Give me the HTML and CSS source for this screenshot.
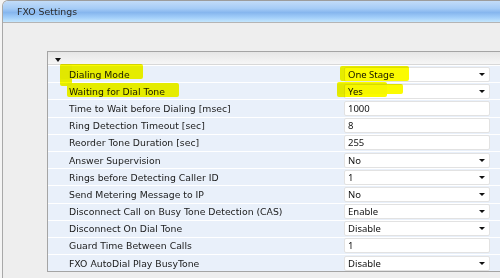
FILE: index.html
```html
<!DOCTYPE html>
<html>
<head>
<meta charset="UTF-8">
<title>FXO Settings</title>
<link rel="stylesheet" href="styles.css">
</head>
<body>
<div class="window">
  <div class="titlebar">FXO Settings</div>
  <div class="content">
    <div class="panel">
      <div class="panel-head"><span class="caret"></span></div>
      <div class="row"><span class="label">Dialing Mode</span><span class="field sel">One Stage<i class="arrow"></i></span></div>
      <div class="row"><span class="label">Waiting for Dial Tone</span><span class="field sel">Yes<i class="arrow"></i></span></div>
      <div class="row"><span class="label">Time to Wait before Dialing [msec]</span><span class="field">1000</span></div>
      <div class="row"><span class="label">Ring Detection Timeout [sec]</span><span class="field">8</span></div>
      <div class="row"><span class="label">Reorder Tone Duration [sec]</span><span class="field">255</span></div>
      <div class="row"><span class="label">Answer Supervision</span><span class="field sel">No<i class="arrow"></i></span></div>
      <div class="row"><span class="label">Rings before Detecting Caller ID</span><span class="field sel">1<i class="arrow"></i></span></div>
      <div class="row"><span class="label">Send Metering Message to IP</span><span class="field sel">No<i class="arrow"></i></span></div>
      <div class="row"><span class="label">Disconnect Call on Busy Tone Detection (CAS)</span><span class="field sel">Enable<i class="arrow"></i></span></div>
      <div class="row"><span class="label">Disconnect On Dial Tone</span><span class="field sel">Disable<i class="arrow"></i></span></div>
      <div class="row"><span class="label">Guard Time Between Calls</span><span class="field">1</span></div>
      <div class="row"><span class="label">FXO AutoDial Play BusyTone</span><span class="field sel">Disable<i class="arrow"></i></span></div>
    </div>
  </div>
</div>
<!-- highlighter marks drawn over the page -->
<div class="mark m1"></div>
<div class="mark m1b"></div>
<div class="mark m2"></div>
<div class="mark m3"></div>
<div class="mark m4"></div>
<div class="mark m4b"></div>
</body>
</html>
```
FILE: styles.css
```css
html, body {
margin: 0;
height: 278px;
overflow: hidden;
background: #f4f4f4;
}
body {
position: relative;
font-family: "DejaVu Sans", Verdana, sans-serif;
}
.window {
margin-left: 2px;
height: 278px;
border-left: 1px solid #a8a8a8;
border-top: 1px solid #9c9c9c;
border-top-left-radius: 6px;
background: #eeeeee;
}
.titlebar {
height: 21px;
line-height: 21px;
padding-left: 14px;
font-size: 9.4px;
color: #2b2b2b;
border-top-left-radius: 5px;
border-bottom: 1px solid #b4b4b4;
background: linear-gradient(#c2dcf8, #a6ccf6 35%, #86b6ee 55%, #a4d0fa 80%, #c4e6fd);
}
.content {
padding: 28px 0 0 44px;
}
.panel {
width: 470px;
border: 1px solid #a4a4a4;
border-right: none;
background: #e9f0fa;
}
.panel-head {
height: 12px;
border-bottom: 1px solid #d8d8d8;
background: linear-gradient(#e6e6e6, #f6f6f6);
padding-left: 7px;
}
.caret {
display: inline-block;
margin-top: 6px;
border-left: 3px solid transparent;
border-right: 3px solid transparent;
border-top: 4px solid #111;
vertical-align: top;
}
.row {
display: flex;
align-items: center;
height: 16.2px;
border-top: 1px solid #ffffff;
}
.label {
width: 275px;
padding-left: 21px;
font-size: 9.3px;
color: #1a1a1a;
white-space: nowrap;
}
.field {
position: relative;
box-sizing: border-box;
width: 146px;
height: 15px;
line-height: 13px;
padding-left: 3px;
background: #ffffff;
border: 1px solid #e2e2e2;
border-radius: 2px;
font-family: "Noto Sans", sans-serif;
font-size: 9.5px;
color: #111;
}
.arrow {
position: absolute;
right: 4px;
top: 5px;
border-left: 3px solid transparent;
border-right: 3px solid transparent;
border-top: 3px solid #111;
}
.mark {
position: absolute;
background: #fbfb00;
mix-blend-mode: multiply;
border-radius: 2px;
}
.m1 { left: 60px; top: 64px; width: 83px; height: 15px; }
.m1b { left: 60px; top: 64px; width: 12px; height: 22px; }
.m2 { left: 67px; top: 83px; width: 112px; height: 14px; }
.m3 { left: 340px; top: 66px; width: 69px; height: 15px; }
.m4 { left: 337px; top: 82px; width: 50px; height: 15px; }
.m4b { left: 337px; top: 84px; width: 66px; height: 10px; }
```
